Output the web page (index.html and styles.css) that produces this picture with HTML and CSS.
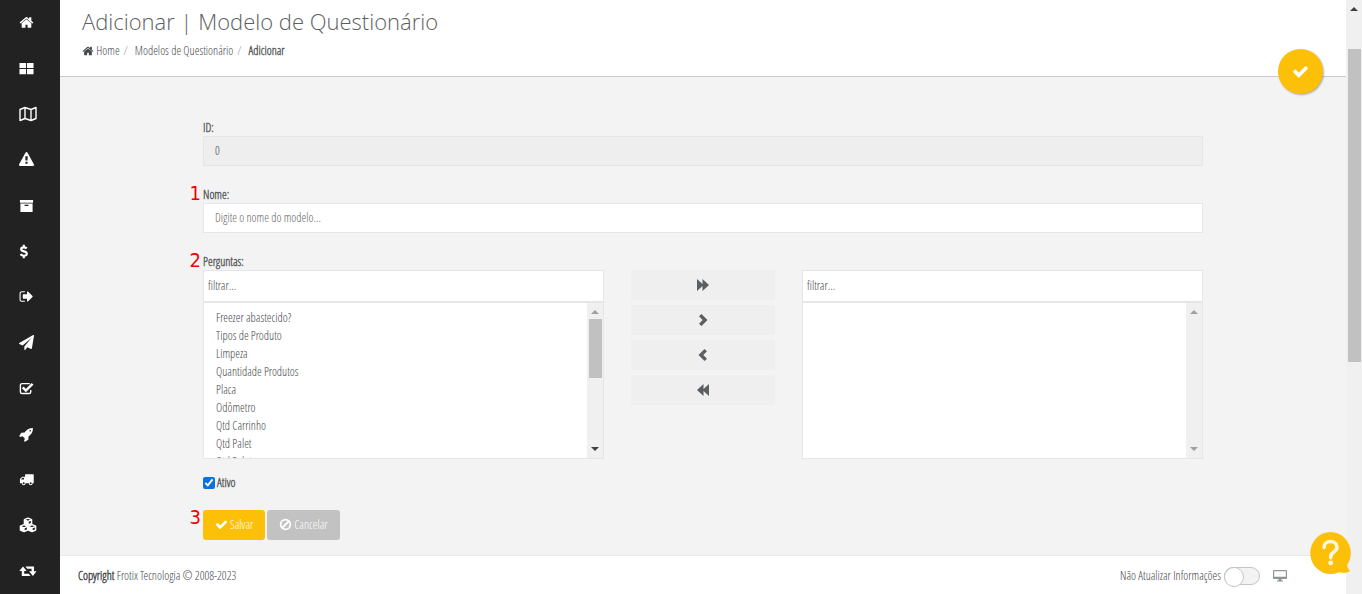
FILE: index.html
```
<!DOCTYPE html>
<html lang="pt-BR">
<head>
    <meta charset="UTF-8">
    <meta name="viewport" content="width=device-width, initial-scale=1.0">
    <title>Adicionar | Modelo de Questionário</title>
    <link rel="stylesheet" href="styles.css">
</head>
<body>
    <svg class="sprite" aria-hidden="true">
        <symbol id="i-home" viewBox="0 0 1792 1792"><path d="M1472 992v480q0 26-19 45t-45 19h-384v-384h-256v384h-384q-26 0-45-19t-19-45v-480q0-1 .5-3t.5-3l575-474 575 474q1 2 1 6zm223-69l-62 74q-8 9-21 11h-3q-13 0-21-7l-692-577-692 577q-12 8-24 7-13-2-21-11l-62-74q-8-10-7-23.500t11-21.500l719-599q32-26 76-26t76 26l244 204v-195q0-14 9-23t23-9h192q14 0 23 9t9 23v408l219 182q10 8 11 21.500t-7 23.500z"/></symbol>
        <symbol id="i-check" viewBox="0 0 1792 1792"><path d="M1671 566q0 40-28 68l-724 724-136 136q-28 28-68 28t-68-28l-136-136-362-362q-28-28-28-68t28-68l136-136q28-28 68-28t68 28l294 295 656-657q28-28 68-28t68 28l136 136q28 28 28 68z"/></symbol>
        <symbol id="i-ban" viewBox="0 0 16 16"><g fill="none" stroke="currentColor" stroke-width="2.200"><circle cx="8" cy="8" r="6"/><path d="M12 4L4 12"/></g></symbol>
    </svg>

    <nav class="sidebar">
        <a href="#" aria-label="Home"><svg class="icon"><use href="#i-home"/></svg></a>
        <a href="#" aria-label="Painel"><svg class="icon" viewBox="0 0 16 16"><path d="M.5 2h7v5.500h-7zM8.500 2h7v5.500h-7zM.5 8.500h7V14h-7zM8.500 8.500h7V14h-7z"/></svg></a>
        <a href="#" aria-label="Mapa"><svg class="icon icon-wide" viewBox="0 0 18 16"><path fill="none" stroke="currentColor" stroke-width="1.400" stroke-linejoin="round" d="M1 3.500l5-2 6 2 5-2v11l-5 2-6-2-5 2zM6 1.500v11M12 3.500v11"/></svg></a>
        <a href="#" aria-label="Alertas"><svg class="icon" viewBox="0 0 1792 1792"><path d="M1024 1375v-190q0-14-9.500-23.500t-22.500-9.500h-192q-13 0-22.500 9.500t-9.500 23.500v190q0 14 9.500 23.500t22.500 9.500h192q13 0 22.500-9.500t9.500-23.500zm-2-374l18-459q0-12-10-19-13-11-24-11h-220q-11 0-24 11-10 7-10 21l17 457q0 10 10 16.500t24 6.500h185q14 0 23.500-6.500t10.500-16.500zm-14-934l768 1408q35 63-2 126-17 29-46.500 46t-63.500 17h-1536q-34 0-63.500-17t-46.500-46q-37-63-2-126l768-1408q17-31 47-49t65-18 65 18 47 49z"/></svg></a>
        <a href="#" aria-label="Arquivo"><svg class="icon" viewBox="0 0 16 16"><path d="M1 2h14v3H1zM1.500 5.800h13V15h-13zM6 7.200v1.200h4V7.200z" fill-rule="evenodd"/></svg></a>
        <a href="#" aria-label="Financeiro"><svg class="icon" viewBox="0 0 16 16"><path fill="none" stroke="currentColor" stroke-width="2.300" d="M8.300 4.700C7.300 3.900 6.300 3.600 5 3.600c-1.700 0-2.700.8-2.700 1.900 0 3 6 1.700 6 4.800 0 1.300-1.200 2.200-3 2.200-1.500 0-2.800-.5-3.800-1.500M5.100.8v3M5.100 12v3.200"/></svg></a>
        <a href="#" aria-label="Saídas"><svg class="icon" viewBox="0 0 1792 1792"><path d="M704 1440q0 4 1 20t.5 26.500-3 23.500-10 19.500-20.500 6.500h-320q-119 0-203.500-84.500t-84.500-203.500v-704q0-119 84.500-203.500t203.500-84.500h320q13 0 22.500 9.500t9.500 22.500q0 4 1 20t.5 26.500-3 23.500-10 19.500-20.500 6.500h-320q-66 0-113 47t-47 113v704q0 66 47 113t113 47h312l11.500 1 11.500 3 8 5.500 7 9 2 13.500zm928-544q0 26-19 45l-544 544q-19 19-45 19t-45-19-19-45v-288h-448q-26 0-45-19t-19-45v-384q0-26 19-45t45-19h448v-288q0-26 19-45t45-19 45 19l544 544q19 19 19 45z"/></svg></a>
        <a href="#" aria-label="Mensagens"><svg class="icon" viewBox="0 0 1792 1792"><path d="M1764 11q33 24 27 64l-256 1536q-5 29-32 45-14 8-31 8-11 0-24-5l-453-185-242 295q-18 23-49 23-13 0-22-4-19-7-30.500-23.500t-11.500-36.500v-349l864-1059-1069 925-395-162q-37-14-40-55-2-40 32-59l1664-960q15-9 32-9 20 0 36 11z"/></svg></a>
        <a href="#" aria-label="Questionários"><svg class="icon" viewBox="0 0 16 16"><g fill="none" stroke="currentColor"><path stroke-width="1.500" d="M11.500 2.800H3.300a1.800 1.800 0 0 0-1.800 1.800v7a1.800 1.800 0 0 0 1.800 1.800h7.400a1.800 1.800 0 0 0 1.800-1.800V9.500"/><path stroke-width="2.600" d="M4 6.800l3.300 3.400L14.500 3"/></g></svg></a>
        <a href="#" aria-label="Missões"><svg class="icon" viewBox="0 0 1792 1792"><path d="M1440 448q0-40-28-68t-68-28-68 28-28 68 28 68 68 28 68-28 28-68zm224-288q0 249-75.500 430.500t-253.500 360.500q-81 80-195 176l-20 379q-2 16-16 26l-384 224q-7 4-16 4-12 0-23-9l-64-64q-13-14-8-32l85-276-281-281-276 85q-3 1-9 1-14 0-23-9l-64-64q-17-19-5-39l224-384q10-14 26-16l379-20q96-114 176-195 188-187 358-258t431-71q14 0 24 9.500t10 22.500z"/></svg></a>
        <a href="#" aria-label="Veículos"><svg class="icon" viewBox="0 0 16 16"><path fill-rule="evenodd" d="M6.500 2.500H15a.7.700 0 0 1 .7.700V12h-1.200a2 2 0 0 1-4 0H7a2 2 0 0 1-4 0H1V7.500L3.400 5h3.100zM5.300 6H3.800L2.200 7.700V8h3.100zM5 10.900a1.100 1.100 0 1 0 0 2.200 1.100 1.100 0 0 0 0-2.200zM12.500 10.900a1.100 1.100 0 1 0 0 2.200 1.100 1.100 0 0 0 0-2.200z"/></svg></a>
        <a href="#" aria-label="Produtos"><svg class="icon icon-wide" viewBox="0 0 18 16"><g fill="none" stroke="currentColor" stroke-width="1.400" stroke-linejoin="round"><path id="cube" d="M9 1.200l3.600 1.500v3.800L9 8 5.400 6.500V2.700zM5.400 2.900L9 4.300l3.600-1.400M9 4.300V8"/><use href="#cube" x="-4" y="6.500"/><use href="#cube" x="4" y="6.500"/></g><path d="M5.400 2.900L9 4.300V8L5.400 6.500zM1.400 9.400L5 10.800v3.700L1.400 13zM9.400 9.400l3.600 1.400v3.700L9.400 13z"/></svg></a>
        <a href="#" aria-label="Trocas"><svg class="icon icon-wide" viewBox="0 0 18 16"><path d="M4 3.500L.3 8H2.800v5H11.500L9.800 10.700H5.200V8h2.500zM6.500 3.500L8.200 5.800h4.400v2.400h-2.500L13.900 13l3.600-4.800H15V3.500z"/></svg></a>
    </nav>

    <div class="page">
        <header class="page-header">
            <h1>Adicionar | Modelo de Questionário</h1>
            <ol class="breadcrumb">
                <li><a href="#"><svg class="icon-sm"><use href="#i-home"/></svg> Home</a></li>
                <li><a href="#">Modelos de Questionário</a></li>
                <li class="active">Adicionar</li>
            </ol>
            <button class="btn-float" type="submit" form="form-modelo" aria-label="Salvar"><svg class="icon-check"><use href="#i-check"/></svg></button>
        </header>

        <main class="content">
            <form id="form-modelo" class="form">
                <div class="form-group">
                    <label for="id">ID:</label>
                    <input class="form-control" id="id" type="text" value="0" disabled>
                </div>

                <div class="form-group">
                    <span class="step">1</span>
                    <label for="nome">Nome:</label>
                    <input class="form-control" id="nome" type="text" placeholder="Digite o nome do modelo...">
                </div>

                <div class="form-group">
                    <span class="step">2</span>
                    <label for="perguntas">Perguntas:</label>
                    <div class="dual-list">
                        <div class="list-box">
                            <input class="filter" type="text" placeholder="filtrar..." aria-label="Filtrar perguntas">
                            <div class="list-body">
                                <select id="perguntas" multiple>
                                    <option>Freezer abastecido?</option>
                                    <option>Tipos de Produto</option>
                                    <option>Limpeza</option>
                                    <option>Quantidade Produtos</option>
                                    <option>Placa</option>
                                    <option>Odômetro</option>
                                    <option>Qtd Carrinho</option>
                                    <option>Qtd Palet</option>
                                    <option>Qtd Palet</option>
                                </select>
                                <div class="scroll">
                                    <span class="arrow up"></span>
                                    <span class="thumb"></span>
                                    <span class="arrow down dark"></span>
                                </div>
                            </div>
                        </div>
                        <div class="moves">
                            <button type="button" aria-label="Adicionar todas"><svg class="icon-move" viewBox="0 0 14 14"><path d="M1 1l5.500 5V1L13 7l-6.500 6V8L1 13z"/></svg></button>
                            <button type="button" aria-label="Adicionar"><svg class="icon-move" viewBox="0 0 14 14"><path d="M5.500 1l6 6-6 6-2.500-2.300L6.700 7 3 3.300z"/></svg></button>
                            <button type="button" aria-label="Remover"><svg class="icon-move" viewBox="0 0 14 14"><path d="M8.500 1l-6 6 6 6 2.500-2.300L7.300 7 11 3.300z"/></svg></button>
                            <button type="button" aria-label="Remover todas"><svg class="icon-move" viewBox="0 0 14 14"><path d="M13 1L7.500 6V1L1 7l6.500 6V8l5.500 5z"/></svg></button>
                        </div>
                        <div class="list-box">
                            <input class="filter" type="text" placeholder="filtrar..." aria-label="Filtrar selecionadas">
                            <div class="list-body">
                                <select multiple aria-label="Perguntas selecionadas"></select>
                                <div class="scroll">
                                    <span class="arrow up"></span>
                                    <span class="arrow down"></span>
                                </div>
                            </div>
                        </div>
                    </div>
                </div>

                <div class="check">
                    <input type="checkbox" id="ativo" checked>
                    <label for="ativo">Ativo</label>
                </div>

                <div class="actions">
                    <span class="step">3</span>
                    <button class="btn btn-primary" type="submit"><svg class="icon-btn"><use href="#i-check"/></svg>Salvar</button>
                    <button class="btn btn-default" type="button"><svg class="icon-btn"><use href="#i-ban"/></svg>Cancelar</button>
                </div>
            </form>
        </main>

        <footer class="footer">
            <span class="copy"><b>Copyright</b> Frotix Tecnologia © 2008-2023</span>
            <label for="atualizar">Não Atualizar Informações</label>
            <input class="switch" id="atualizar" type="checkbox">
            <svg class="icon-screen" viewBox="0 0 14 12"><path fill-rule="evenodd" d="M1 0h12a1 1 0 0 1 1 1v7a1 1 0 0 1-1 1H8.500v1.500H10v1H4v-1h1.500V9H1a1 1 0 0 1-1-1V1a1 1 0 0 1 1-1zM1.200 1.200v5.500h11.600V1.200z"/></svg>
        </footer>
    </div>

    <div class="scroll scroll-page">
        <span class="arrow up dark"></span>
        <span class="thumb"></span>
    </div>

    <button class="help" type="button" aria-label="Ajuda">
        <svg viewBox="0 0 42 43"><g fill="#fdc009"><ellipse cx="20.500" cy="21" rx="20.300" ry="21"/><path d="M37 31l.5 4 2.500 4.500-5 1.500-9-1z"/></g><path fill="none" stroke="#fff6dc" stroke-width="3.600" stroke-linecap="round" d="M14 15.500c0-4 2.800-6 6.500-6s6.500 2.300 6.500 5.800c0 4.700-6.300 4.700-6.300 9.500v1"/><circle cx="20.700" cy="31" r="2.400" fill="#fff6dc"/></svg>
    </button>
</body>
</html>
```
FILE: styles.css
```
* {
    box-sizing: border-box;
}

body {
    margin: 0;
    display: flex;
    height: 100vh;
    overflow: hidden;
    font-family: "Open Sans Condensed Light", "Open Sans Condensed", "Liberation Sans Narrow", sans-serif;
    font-size: 12px;
    font-weight: 300;
    line-height: 18px;
    color: #45484a;
    background-color: #f3f3f3;
}

input,
select,
button {
    font-family: inherit;
    font-size: inherit;
    font-weight: inherit;
    color: inherit;
}

a {
    color: inherit;
    text-decoration: none;
}

svg {
    fill: currentColor;
    flex: none;
}

.sprite {
    position: absolute;
    width: 0;
    height: 0;
}

.icon {
    width: 15px;
    height: 15px;
}

.icon-wide {
    width: 18px;
    height: 16px;
}

.icon-check {
    width: 17px;
    height: 17px;
}

.icon-sm {
    width: 12px;
    height: 12px;
    vertical-align: -2px;
}

/* Sidebar */
.sidebar {
    width: 60px;
    flex: none;
    display: flex;
    flex-direction: column;
    background-color: #222;
    color: #fff;
}

.sidebar a {
    flex: 1;
    display: flex;
    align-items: center;
    padding-left: 19px;
}

/* Page */
.page {
    flex: 1;
    min-width: 0;
    display: flex;
    flex-direction: column;
}

.page-header {
    position: relative;
    height: 77px;
    padding: 5px 22px;
    background-color: #fff;
    border-bottom: 1px solid #c8cccc;
}

h1 {
    margin: 0;
    font-family: "Open Sans", sans-serif;
    font-size: 22px;
    font-weight: 300;
    line-height: 32px;
    color: #5c5f61;
}

.breadcrumb {
    display: flex;
    margin: 5px 0 0;
    padding: 0;
    list-style: none;
}

.breadcrumb li + li::before {
    content: "/";
    padding: 0 7px 0 4px;
    font-weight: 300;
    color: #999;
}

.breadcrumb .active {
    font-weight: bold;
    color: #5c5f61;
}

.btn-float {
    position: absolute;
    right: 23px;
    bottom: -18px;
    width: 45px;
    height: 45px;
    padding: 0;
    border: none;
    border-radius: 50%;
    background-color: #fdc009;
    color: #fff;
    display: flex;
    align-items: center;
    justify-content: center;
    box-shadow: 1px 1px 2px rgba(0, 0, 0, 0.3);
}

.content {
    flex: 1;
    padding: 42px 40px 0;
}

.form {
    max-width: 1000px;
    margin: 0 auto;
}

.form-group {
    position: relative;
    margin-bottom: 20px;
}

.form-group label,
.check label {
    display: block;
    line-height: 17px;
    font-weight: bold;
    color: #5c5f61;
}

.form-control {
    display: block;
    width: 100%;
    height: 30px;
    padding: 0 11px 2px;
    border: 1px solid #e5e6e7;
    background-color: #fff;
}

.form-control:disabled {
    background-color: #eee;
}

input::placeholder {
    color: #666;
    opacity: 1;
}

.step {
    position: absolute;
    right: 100%;
    top: -1px;
    padding-right: 2px;
    font-family: "DejaVu Sans Condensed", "DejaVu Sans", sans-serif;
    font-size: 20px;
    font-weight: normal;
    line-height: 16px;
    color: #f00000;
}

/* Dual list */
.dual-list {
    display: grid;
    grid-template-columns: 1fr 144px 1fr;
    gap: 27px;
}

.filter {
    display: block;
    width: 100%;
    height: 32px;
    padding: 0 4px 2px;
    border: 1px solid #e5e6e7;
    background-color: #fff;
}

.filter::placeholder {
    color: #45484a;
}

.list-body {
    display: flex;
    height: 157px;
    border: 1px solid #e5e6e7;
    background-color: #fff;
}

.list-body select {
    flex: 1;
    min-width: 0;
    padding: 6px 0 0 10px;
    border: none;
    outline: none;
    overflow: hidden;
    background-color: #fff;
}

.list-body option {
    height: 18px;
    padding: 0 2px;
    line-height: 18px;
}

.moves {
    display: flex;
    flex-direction: column;
    gap: 5px;
    color: #5c5f61;
}

.moves button {
    display: flex;
    align-items: center;
    justify-content: center;
    height: 30px;
    border: none;
    background-color: #efefef;
}

.icon-move {
    width: 14px;
    height: 14px;
}

/* Scrollbars */
.scroll {
    flex: none;
    width: 16px;
    padding: 7px 2px;
    display: flex;
    flex-direction: column;
    align-items: center;
    gap: 5px;
    background-color: #f0f0f0;
    color: #a0a0a0;
}

.scroll .thumb {
    width: 13px;
    height: 59px;
    background-color: #c1c1c1;
}

.arrow {
    border: 4px solid transparent;
}

.arrow.up {
    border-top: none;
    border-bottom-color: currentColor;
}

.arrow.down {
    margin-top: auto;
    border-bottom: none;
    border-top-color: currentColor;
}

.arrow.dark {
    color: #404040;
}

.scroll-page {
    gap: 38px;
}

.scroll-page .thumb {
    height: 313px;
}

/* Form actions */
.check {
    display: flex;
    align-items: center;
    gap: 2px;
    margin-top: -5px;
}

.check input {
    width: 12px;
    height: 12px;
    margin: 0;
    accent-color: #0b72e0;
}

.actions {
    position: relative;
    display: flex;
    gap: 2px;
    margin-top: 19px;
}

.btn {
    display: flex;
    align-items: center;
    gap: 2px;
    height: 30px;
    padding: 0 12px 1px;
    border: none;
    border-radius: 3px;
    color: #fff;
    cursor: pointer;
}

.btn-primary {
    background-color: #fdc009;
}

.btn-default {
    background-color: #c2c2c2;
}

.icon-btn {
    width: 13px;
    height: 13px;
}

/* Footer */
.footer {
    display: flex;
    align-items: center;
    height: 39px;
    padding: 2px 59px 0 18px;
    border-top: 1px solid #e7eaec;
    background-color: #fff;
}

.copy {
    flex: 1;
}

.copy b {
    font-weight: bold;
}

.switch {
    appearance: none;
    display: flex;
    width: 36px;
    height: 18px;
    margin: 0 13px 0 3px;
    border: 1px solid #c4c4c4;
    border-radius: 9px;
    background-color: #f3f3f3;
}

.switch::before {
    content: "";
    width: 18px;
    height: 18px;
    margin: -1px;
    border: 1px solid #c4c4c4;
    border-radius: 50%;
    background-color: #fff;
}

.icon-screen {
    width: 14px;
    height: 12px;
    color: #8f9496;
}

.help {
    position: fixed;
    right: 10px;
    bottom: 19px;
    width: 42px;
    height: 43px;
    padding: 0;
    border: none;
    background: none;
}
```
